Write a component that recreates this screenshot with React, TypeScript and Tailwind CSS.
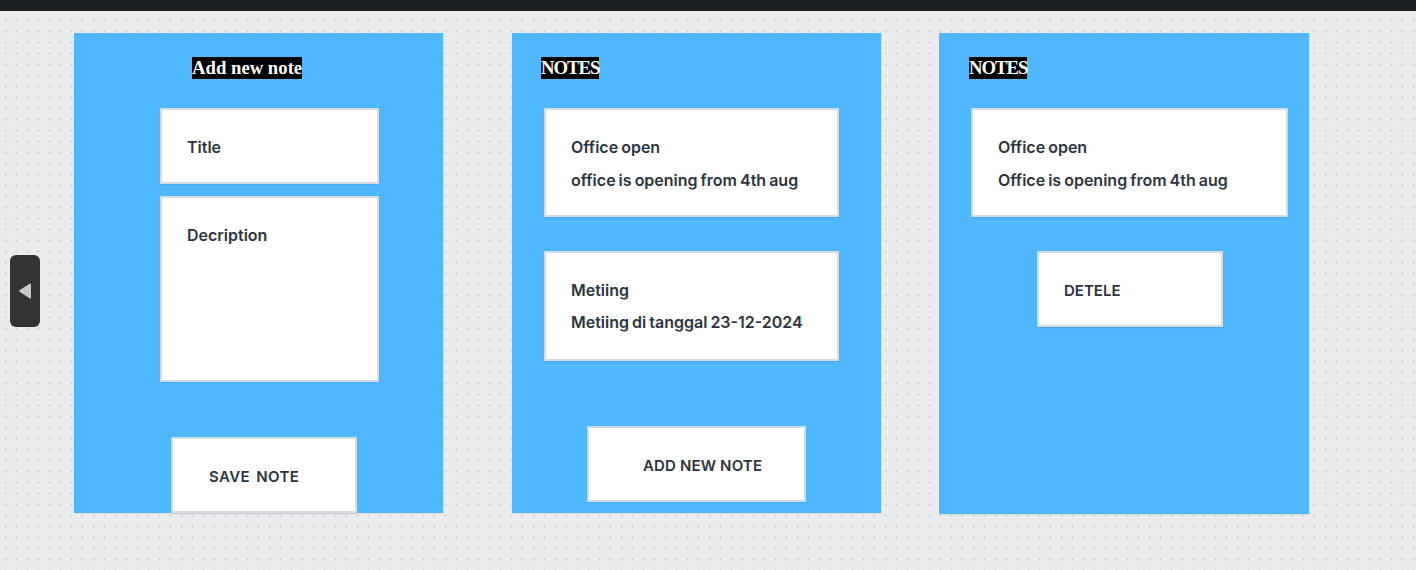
import React from "react";

const base = "font-['Inter',sans-serif] font-semibold leading-[18px] text-[#2b3444]";
const txt = base + " text-[16px] [word-spacing:-1px]";
const btn = base + " text-[15px]";
const box = "bg-white border-2 border-[#d3dce6] shadow-[0_1px_1px_rgba(0,0,0,0.08)]";
const head =
  "inline-block self-start bg-black text-white font-['Liberation_Serif',serif] font-bold leading-[22px] h-[22px]";

export default function App() {
  return (
    <div className="w-full h-[570px] flex flex-col bg-[#ebecee] overflow-hidden">
      <div className="h-[11px] bg-[#1d2023] shrink-0" />
      <div className="relative flex-1 bg-[radial-gradient(circle,#d7d8db_1.1px,transparent_1.4px)] bg-[size:11px_11px] bg-[position:0_4px]">
        {/* sidebar handle */}
        <div className="absolute left-[10px] top-[244px] w-[30px] h-[72px] rounded-[6px] bg-[#333335] flex items-center justify-center">
          <svg width="16" height="20" viewBox="0 0 16 20">
            <path d="M13 2.5 Q14 2 14 3.5 L14 16.5 Q14 18 13 17.5 L2.5 10.8 Q1.5 10 2.5 9.2 Z" fill="#c9c9c9" />
          </svg>
        </div>

        <div className="flex items-start pl-[74px] pt-[22px]">
          {/* Card 1 */}
          <div className="w-[369px] h-[480px] bg-[#4fb8fc] shadow-[1px_1px_1px_rgba(0,0,0,0.06)] flex flex-col pt-[24px]">
            <h3 className={head + " text-[18.72px] ml-[118px]"}>Add new note</h3>
            <div className={box + " ml-[86px] mt-[29px] w-[219px] h-[76px] pt-[28px] pl-[25px]"}>
              <div className={txt}>Title</div>
            </div>
            <div className={box + " ml-[86px] mt-[12px] w-[219px] h-[186px] pt-[28px] pl-[25px]"}>
              <div className={txt}>Decription</div>
            </div>
            <div className={box + " ml-[97px] mt-[55px] w-[186px] h-[76px] pt-[29px] pl-[36px]"}>
              <div className={btn + " tracking-[0.4px] [word-spacing:2px]"}>SAVE NOTE</div>
            </div>
          </div>

          {/* Card 2 */}
          <div className="ml-[69px] w-[369px] h-[480px] bg-[#4fb8fc] shadow-[1px_1px_1px_rgba(0,0,0,0.06)] flex flex-col pt-[24px]">
            <h3 className={head + " text-[18.72px] tracking-[-1px] ml-[29px]"}>NOTES</h3>
            <div className={box + " ml-[32px] mt-[29px] w-[295px] h-[109px] pt-[28px] pl-[25px] flex flex-col gap-[15px]"}>
              <div className={txt}>Office open</div>
              <div className={txt}>office is opening from 4th aug</div>
            </div>
            <div className={box + " ml-[32px] mt-[34px] w-[295px] h-[110px] pt-[28px] pl-[25px] flex flex-col gap-[14px]"}>
              <div className={txt}>Metiing</div>
              <div className={txt}>Metiing di tanggal 23-12-2024</div>
            </div>
            <div className={box + " ml-[75px] mt-[65px] w-[219px] h-[76px] pt-[29px] pl-[54px]"}>
              <div className={btn + " tracking-[0.15px]"}>ADD NEW NOTE</div>
            </div>
          </div>

          {/* Card 3 */}
          <div className="ml-[58px] w-[370px] h-[481px] bg-[#4fb8fc] shadow-[1px_1px_1px_rgba(0,0,0,0.06)] flex flex-col pt-[24px]">
            <h3 className={head + " text-[18.72px] tracking-[-1px] ml-[30px]"}>NOTES</h3>
            <div className={box + " ml-[32px] mt-[29px] w-[317px] h-[109px] pt-[28px] pl-[25px] flex flex-col gap-[15px]"}>
              <div className={txt}>Office open</div>
              <div className={txt}>Office is opening from 4th aug</div>
            </div>
            <div className={box + " ml-[98px] mt-[34px] w-[186px] h-[76px] pt-[29px] pl-[25px]"}>
              <div className={btn}>DETELE</div>
            </div>
          </div>
        </div>
      </div>
    </div>
  );
}
